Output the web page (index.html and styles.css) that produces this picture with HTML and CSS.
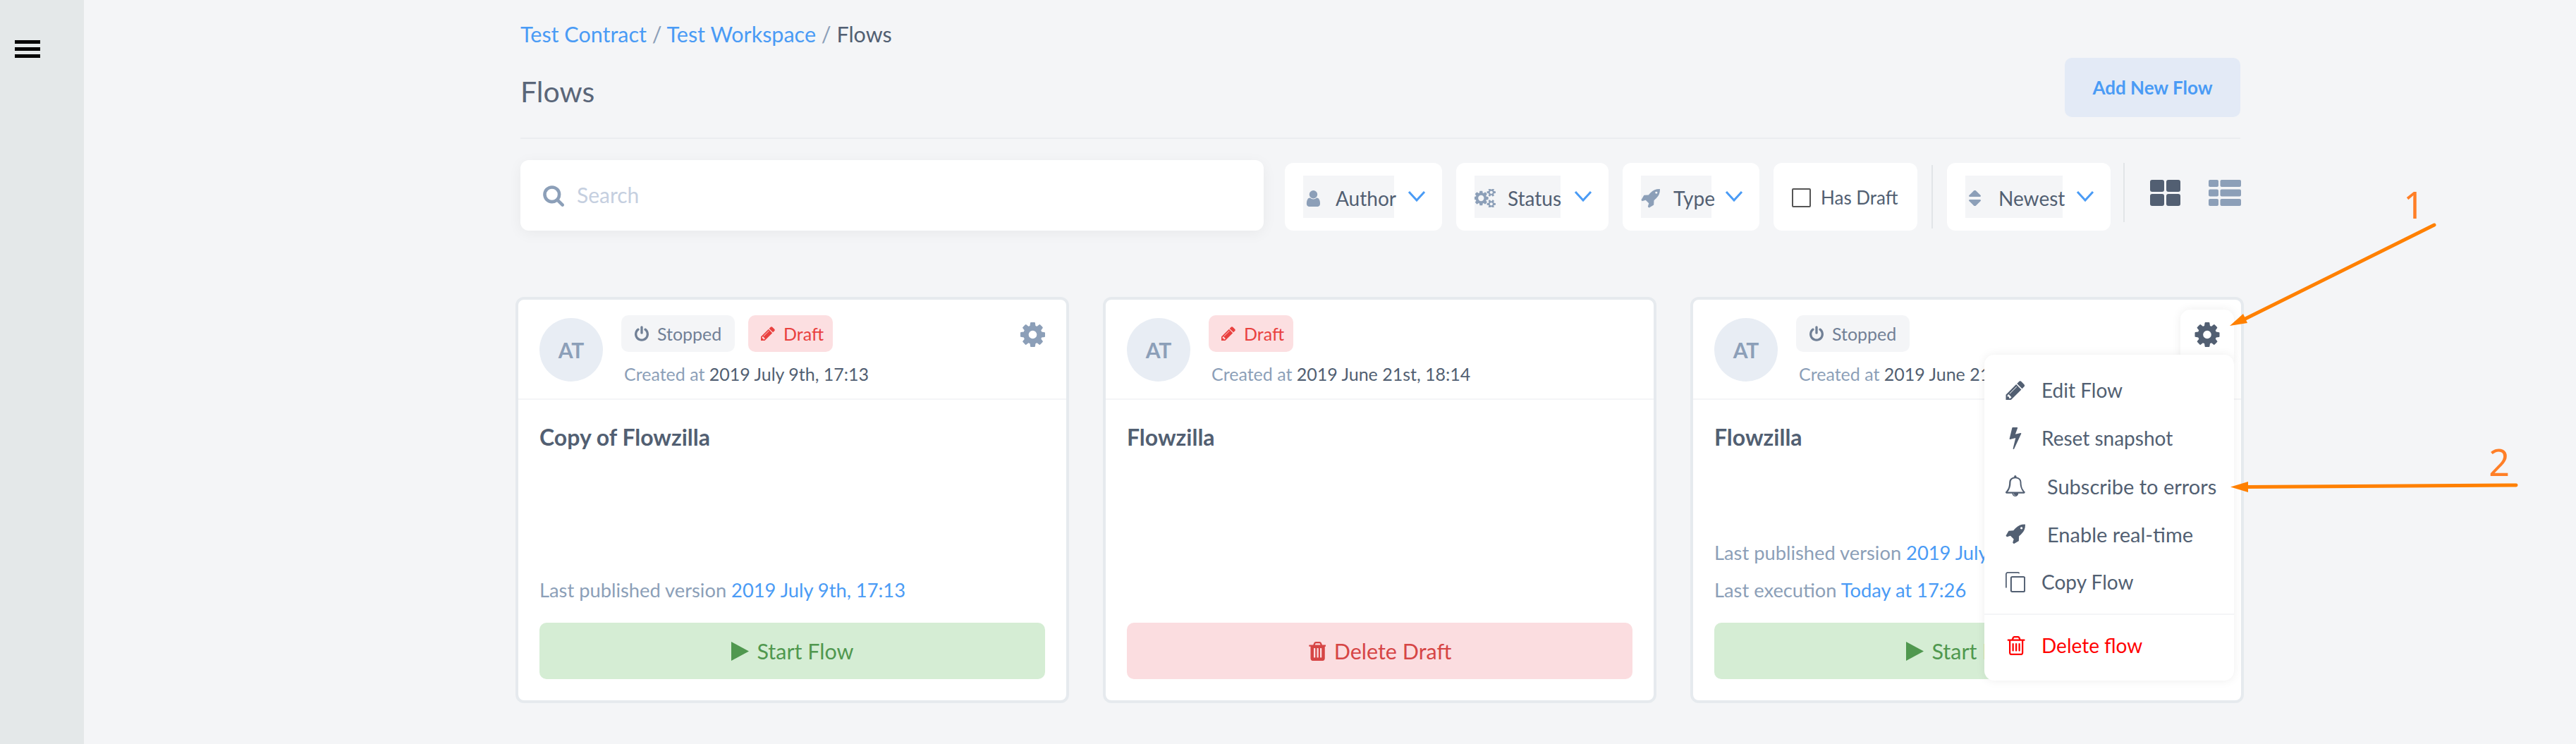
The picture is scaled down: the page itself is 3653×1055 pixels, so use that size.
FILE: index.html
```html
<!DOCTYPE html>
<html lang="en">
<head>
  <meta charset="UTF-8" />
  <meta name="viewport" content="width=device-width, initial-scale=1" />
  <title>Flows</title>
  <link rel="stylesheet" href="styles.css">
</head>
<body>
  <svg class="sprite" xmlns="http://www.w3.org/2000/svg">
    <symbol id="i-search" viewBox="0 64 1728 1728"><path d="M1216 832q0-185-131.5-316.5t-316.5-131.5-316.5 131.5-131.5 316.5 131.5 316.5 316.5 131.5 316.5-131.5 131.5-316.5zm512 832q0 52-38 90t-90 38q-54 0-90-38l-343-342q-179 124-399 124-143 0-273.5-55.5t-225-150-150-225-55.5-273.5 55.5-273.5 150-225 225-150 273.5-55.5 273.5 55.5 225 150 150 225 55.5 273.5q0 220-124 399l343 343q37 37 37 90z"/></symbol>
    <symbol id="i-user" viewBox="128 128 1408 1536"><path d="M1536 1399q0 109-62.5 187t-150.5 78h-854q-88 0-150.5-78t-62.5-187q0-85 8.5-160.5t31.5-152 58.5-131 94-89 134.5-34.5q131 128 313 128t313-128q76 0 134.5 34.5t94 89 58.5 131 31.5 152 8.5 160.5zm-256-887q0 159-112.5 271.5t-271.5 112.5-271.5-112.5-112.5-271.5 112.5-271.5 271.5-112.5 271.5 112.5 112.5 271.5z"/></symbol>
    <symbol id="i-cogs" viewBox="0 128 1920 1536"><path d="M832 896q0-106-75-181t-181-75-181 75-75 181 75 181 181 75 181-75 75-181zm768 512q0-52-38-90t-90-38-90 38-38 90q0 53 37.5 90.5t90.5 37.5 90.5-37.5 37.5-90.5zm0-1024q0-52-38-90t-90-38-90 38-38 90q0 53 37.5 90.5t90.5 37.5 90.5-37.5 37.5-90.5zm-384 421v185q0 10-7 19.5t-16 10.5l-155 24q-11 35-32 76 34 48 90 115 7 11 7 20 0 12-7 19-23 30-82.5 89.5t-78.5 59.5q-11 0-21-7l-115-90q-37 19-77 31-11 108-23 155-7 24-30 24h-186q-11 0-20-7.5t-10-17.5l-23-153q-34-10-75-31l-118 89q-7 7-20 7-11 0-21-8-144-133-144-160 0-9 7-19 10-14 41-53t47-61q-23-44-35-82l-152-24q-10-1-17-9.5t-7-19.5v-185q0-10 7-19.5t16-10.5l155-24q11-35 32-76-34-48-90-115-7-11-7-20 0-12 7-20 22-30 82-89t79-59q11 0 21 7l115 90q34-18 77-32 11-108 23-154 7-24 30-24h186q11 0 20 7.5t10 17.5l23 153q34 10 75 31l118-89q8-7 20-7 11 0 21 8 144 133 144 160 0 8-7 19-12 16-42 54t-45 60q23 48 34 82l152 23q10 2 17 10.5t7 19.5zm640 533v140q0 16-149 31-12 27-30 52 51 113 51 138 0 4-4 7-122 71-124 71-8 0-46-47t-52-68q-20 2-30 2t-30-2q-14 21-52 68t-46 47q-2 0-124-71-4-3-4-7 0-25 51-138-18-25-30-52-149-15-149-31v-140q0-16 149-31 13-29 30-52-51-113-51-138 0-4 4-7 4-2 35-20t59-34 30-16q8 0 46 46.5t52 67.5q20-2 30-2t30 2q51-71 92-112l6-2q4 0 124 70 4 3 4 7 0 25-51 138 17 23 30 52 149 15 149 31zm0-1024v140q0 16-149 31-12 27-30 52 51 113 51 138 0 4-4 7-122 71-124 71-8 0-46-47t-52-68q-20 2-30 2t-30-2q-14 21-52 68t-46 47q-2 0-124-71-4-3-4-7 0-25 51-138-18-25-30-52-149-15-149-31v-140q0-16 149-31 13-29 30-52-51-113-51-138 0-4 4-7 4-2 35-20t59-34 30-16q8 0 46 46.5t52 67.5q20-2 30-2t30 2q51-71 92-112l6-2q4 0 124 70 4 3 4 7 0 25-51 138 17 23 30 52 149 15 149 31z"/></symbol>
    <symbol id="i-rocket" viewBox="64 128 1664 1664"><path d="M1504 448q0-40-28-68t-68-28-68 28-28 68 28 68 68 28 68-28 28-68zm224-288q0 249-75.5 430.5t-253.5 360.5q-81 80-195 176l-20 379q-2 16-16 26l-384 224q-7 4-16 4-12 0-23-9l-64-64q-13-14-8-32l85-276-281-281-276 85q-3 1-9 1-14 0-23-9l-64-64q-17-19-5-39l224-384q10-14 26-16l379-20q96-114 176-195 188-187 358-258t431-71q14 0 24 9.5t10 22.5z"/></symbol>
    <symbol id="i-sort" viewBox="320 256 1088 1280"><path d="M1408 1088q0 26-19 45l-448 448q-19 19-45 19t-45-19l-448-448q-19-19-19-45t19-45 45-19h896q26 0 45 19t19 45zm0-384q0 26-19 45t-45 19h-896q-26 0-45-19t-19-45 19-45l448-448q19-19 45-19t45 19l448 448q19 19 19 45z"/></symbol>
    <symbol id="i-power" viewBox="128 0 1536 1664"><path d="M1664 896q0 156-61 298t-164 245-245 164-298 61-298-61-245-164-164-245-61-298q0-182 80.5-343t226.5-270q43-32 95.5-25t83.5 50q32 42 24.5 94.5t-49.5 84.5q-98 74-151.5 181t-53.5 228q0 104 40.5 198.5t109.5 163.5 163.5 109.5 198.5 40.5 198.5-40.5 163.5-109.5 109.5-163.5 40.5-198.5q0-121-53.5-228t-151.5-181q-42-32-49.5-84.5t24.5-94.5q31-43 84-50t95 25q146 109 226.5 270t80.5 343zm-640-768v640q0 52-38 90t-90 38-90-38-38-90v-640q0-52 38-90t90-38 90 38 38 90z"/></symbol>
    <symbol id="i-pencil" viewBox="128 128 1536 1536"><path d="M491 1536l91-91-235-235-91 91v107h128v128h107zm523-928q0-22-22-22-10 0-17 7l-542 542q-7 7-7 17 0 22 22 22 10 0 17-7l542-542q7-7 7-17zm-54-192l416 416-832 832h-416v-416zm683 96q0 53-37 90l-166 166-416-416 166-165q36-38 90-38 53 0 91 38l235 234q37 39 37 91z"/></symbol>
    <symbol id="i-gear" viewBox="128 128 1536 1536"><path d="M1152 896q0-106-75-181t-181-75-181 75-75 181 75 181 181 75 181-75 75-181zm512-109v222q0 12-8 23t-20 13l-185 28q-19 54-39 91 35 50 107 138 10 12 10 25t-9 23q-27 37-99 108t-94 71q-12 0-26-9l-138-108q-44 23-91 38-16 136-29 186-7 28-36 28h-222q-14 0-24.5-8.5t-11.5-21.5l-28-184q-49-16-90-37l-141 107q-10 9-25 9-14 0-25-11-126-114-165-168-7-10-7-23 0-12 8-23 15-21 51-66.5t54-70.5q-27-50-41-99l-183-27q-13-2-21-12.5t-8-23.5v-222q0-12 8-23t19-13l186-28q14-46 39-92-40-57-107-138-10-12-10-24 0-10 9-23 26-36 98.5-107.5t94.5-71.5q13 0 26 10l138 107q44-23 91-38 16-136 29-186 7-28 36-28h222q14 0 24.5 8.5t11.5 21.5l28 184q49 16 90 37l142-107q9-9 24-9 13 0 25 10 129 119 165 170 7 8 7 22 0 12-8 23-15 21-51 66.5t-54 70.5q26 50 41 98l183 28q13 2 21 12.5t8 23.5z"/></symbol>
    <symbol id="i-bolt" viewBox="448 128 896 1664"><path d="M1333 566q18 20 7 44l-540 1157q-13 25-42 25-4 0-14-2-17-5-25.5-19t-4.5-30l197-808-406 101q-4 1-12 1-18 0-31-11-18-15-13-39l201-825q4-14 16-23t28-9h328q19 0 32 12.5t13 29.5q0 8-5 18l-171 463 396-98q8-2 12-2 19 0 34 15z"/></symbol>
    <symbol id="i-bell" viewBox="64 0 1664 1792"><path d="M912 1696q0-16-16-16-59 0-101.5-42.5t-42.5-101.5q0-16-16-16t-16 16q0 73 51.5 124.5t124.5 51.5q16 0 16-16zm-666-288h1300q-266-300-266-832 0-51-24-105t-69-103-121.5-80.5-169.5-31.5-169.5 31.5-121.5 80.5-69 103-24 105q0 532-266 832zm1472 0q0 52-38 90t-90 38h-448q0 106-75 181t-181 75-181-75-75-181h-448q-52 0-90-38t-38-90q50-42 91-88t85-119.5 74.5-158.5 50-206 19.5-260q0-152 117-282.5t307-158.5q-8-19-8-39 0-40 28-68t68-28 68 28 28 68q0 20-8 39 190 28 307 158.5t117 282.5q0 139 19.5 260t50 206 74.5 158.5 85 119.5 91 88z"/></symbol>
    <symbol id="i-trash-o" viewBox="128 128 1408 1536"><path d="M704 736v576q0 14-9 23t-23 9h-64q-14 0-23-9t-9-23v-576q0-14 9-23t23-9h64q14 0 23 9t9 23zm256 0v576q0 14-9 23t-23 9h-64q-14 0-23-9t-9-23v-576q0-14 9-23t23-9h64q14 0 23 9t9 23zm256 0v576q0 14-9 23t-23 9h-64q-14 0-23-9t-9-23v-576q0-14 9-23t23-9h64q14 0 23 9t9 23zm128 724v-948h-896v948q0 22 7 40.5t14.5 27 10.5 8.5h832q3 0 10.5-8.5t14.5-27 7-40.5zm-672-1076h448l-48-117q-7-9-17-11h-317q-10 2-17 11zm928 32v64q0 14-9 23t-23 9h-96v948q0 83-47 143.5t-113 60.5h-832q-66 0-113-58.5t-47-141.5v-952h-96q-14 0-23-9t-9-23v-64q0-14 9-23t23-9h309l70-167q15-37 54-63t79-26h320q40 0 79 26t54 63l70 167h309q14 0 23 9t9 23z"/></symbol>
    <symbol id="i-trash" viewBox="128 128 1408 1536"><path d="M704 1376v-704q0-14-9-23t-23-9h-64q-14 0-23 9t-9 23v704q0 14 9 23t23 9h64q14 0 23-9t9-23zm256 0v-704q0-14-9-23t-23-9h-64q-14 0-23 9t-9 23v704q0 14 9 23t23 9h64q14 0 23-9t9-23zm256 0v-704q0-14-9-23t-23-9h-64q-14 0-23 9t-9 23v704q0 14 9 23t23 9h64q14 0 23-9t9-23zm-544-992h448l-48-117q-7-9-17-11h-317q-10 2-17 11zm928 32v64q0 14-9 23t-23 9h-96v948q0 83-47 143.5t-113 60.5h-832q-66 0-113-58.5t-47-141.5v-952h-96q-14 0-23-9t-9-23v-64q0-14 9-23t23-9h309l70-167q15-37 54-63t79-26h320q40 0 79 26t54 63l70 167h309q14 0 23 9t9 23z"/></symbol>
    <symbol id="i-chevron" viewBox="0 0 26 16"><path d="M2 2l11 12L24 2" fill="none" stroke="currentColor" stroke-width="3"/></symbol>
    <symbol id="i-play" viewBox="0 0 25 27"><path d="M0 0l25 13.500L0 27z"/></symbol>
    <symbol id="i-copy" viewBox="0 0 32 33"><path d="M22 2.500a1.500 1.500 0 0 0-1.500-1.500H3.500A2.500 2.500 0 0 0 1 3.500v22" fill="none" stroke="currentColor" stroke-width="2"/><rect x="9" y="8" width="22" height="24" rx="2" fill="none" stroke="currentColor" stroke-width="2.400"/></symbol>
    <symbol id="i-grid" viewBox="0 0 43 37"><rect width="20" height="17" rx="3"/><rect x="23" width="20" height="17" rx="3"/><rect y="20" width="20" height="17" rx="3"/><rect x="23" y="20" width="20" height="17" rx="3"/></symbol>
    <symbol id="i-list" viewBox="0 0 46 37"><rect width="14" height="10" rx="2"/><rect x="16.500" width="29.500" height="10" rx="2"/><rect y="13.500" width="14" height="10" rx="2"/><rect x="16.500" y="13.500" width="29.500" height="10" rx="2"/><rect y="27" width="14" height="10" rx="2"/><rect x="16.500" y="27" width="29.500" height="10" rx="2"/></symbol>
  </svg>

  <aside class="sidebar">
    <button class="hamburger" type="button" aria-label="Menu"><span></span><span></span><span></span></button>
  </aside>

  <main class="main">
    <div class="content">
      <nav class="breadcrumb">
        <a href="#">Test Contract</a> <span class="sep">/</span> <a href="#">Test Workspace</a> <span class="sep">/</span> <span class="current">Flows</span>
      </nav>

      <header class="page-header">
        <h1>Flows</h1>
        <button class="add-btn" type="button">Add New Flow</button>
      </header>

      <div class="toolbar">
        <label class="search">
          <svg class="icon search-icon"><use href="#i-search"/></svg>
          <input type="text" placeholder="Search" />
        </label>

        <div class="filter">
          <div class="filter-box box-author"><svg class="icon fi-user"><use href="#i-user"/></svg><span>Author</span></div>
          <svg class="chevron"><use href="#i-chevron"/></svg>
        </div>
        <div class="filter">
          <div class="filter-box box-status"><svg class="icon fi-cogs"><use href="#i-cogs"/></svg><span>Status</span></div>
          <svg class="chevron"><use href="#i-chevron"/></svg>
        </div>
        <div class="filter">
          <div class="filter-box box-type"><svg class="icon fi-rocket"><use href="#i-rocket"/></svg><span>Type</span></div>
          <svg class="chevron"><use href="#i-chevron"/></svg>
        </div>
        <label class="filter has-draft"><input type="checkbox" /><span>Has Draft</span></label>
        <div class="vline vline-a"></div>
        <div class="filter">
          <div class="filter-box box-sort"><svg class="icon fi-sort"><use href="#i-sort"/></svg><span>Newest</span></div>
          <svg class="chevron"><use href="#i-chevron"/></svg>
        </div>
        <div class="vline vline-b"></div>
        <div class="view-switch">
          <svg class="view-grid"><use href="#i-grid"/></svg>
          <svg class="view-list"><use href="#i-list"/></svg>
        </div>
      </div>

      <section class="cards">
        <article class="card">
          <div class="card-head">
            <div class="avatar">AT</div>
            <div class="card-meta">
              <div class="badges">
                <span class="badge badge-stopped"><svg class="icon"><use href="#i-power"/></svg>Stopped</span>
                <span class="badge badge-draft"><svg class="icon"><use href="#i-pencil"/></svg>Draft</span>
              </div>
              <div class="created">Created at <span>2019 July 9th, 17:13</span></div>
            </div>
            <svg class="icon card-gear"><use href="#i-gear"/></svg>
          </div>
          <div class="card-body">
            <h3>Copy of Flowzilla</h3>
            <div class="card-foot">
              <p class="info">Last published version <a href="#">2019 July 9th, 17:13</a></p>
              <button class="action action-start" type="button"><svg class="icon"><use href="#i-play"/></svg>Start Flow</button>
            </div>
          </div>
        </article>

        <article class="card">
          <div class="card-head">
            <div class="avatar">AT</div>
            <div class="card-meta">
              <div class="badges">
                <span class="badge badge-draft"><svg class="icon"><use href="#i-pencil"/></svg>Draft</span>
              </div>
              <div class="created">Created at <span>2019 June 21st, 18:14</span></div>
            </div>
          </div>
          <div class="card-body">
            <h3>Flowzilla</h3>
            <div class="card-foot">
              <button class="action action-delete" type="button"><svg class="icon"><use href="#i-trash"/></svg>Delete Draft</button>
            </div>
          </div>
        </article>

        <article class="card">
          <div class="card-head">
            <div class="avatar">AT</div>
            <div class="card-meta">
              <div class="badges">
                <span class="badge badge-stopped"><svg class="icon"><use href="#i-power"/></svg>Stopped</span>
              </div>
              <div class="created">Created at <span>2019 June 21st, 18:14</span></div>
            </div>
          </div>
          <div class="card-body">
            <h3>Flowzilla</h3>
            <div class="card-foot">
              <p class="info info-spaced">Last published version <a href="#">2019 July 9th, 17:13</a></p>
              <p class="info">Last execution <a href="#">Today at 17:26</a></p>
              <button class="action action-start" type="button"><svg class="icon"><use href="#i-play"/></svg>Start Flow</button>
            </div>
          </div>

          <!-- open settings menu -->
          <div class="gear-tab"><svg class="icon"><use href="#i-gear"/></svg></div>
          <ul class="menu">
            <li><svg class="icon m-pencil"><use href="#i-pencil"/></svg>Edit Flow</li>
            <li><svg class="icon m-bolt"><use href="#i-bolt"/></svg>Reset snapshot</li>
            <li class="wide"><svg class="icon m-bell"><use href="#i-bell"/></svg>Subscribe to errors</li>
            <li class="wide"><svg class="icon m-rocket"><use href="#i-rocket"/></svg>Enable real-time</li>
            <li><svg class="icon m-copy"><use href="#i-copy"/></svg>Copy Flow</li>
            <li class="menu-delete"><svg class="icon m-trash"><use href="#i-trash-o"/></svg>Delete flow</li>
          </ul>
        </article>
      </section>
    </div>
  </main>

  <!-- hand drawn notes on top of the screenshot -->
  <svg class="notes" width="3653" height="1055" viewBox="0 0 3653 1055" xmlns="http://www.w3.org/2000/svg">
    <text x="3423" y="310" text-anchor="middle" class="note-num">1</text>
    <text x="3544" y="675" text-anchor="middle" class="note-num">2</text>
    <path d="M3452 319L3178 455" class="note-line"/>
    <path d="M3162 462L3181 445L3187 458z" class="note-head"/>
    <path d="M3568 688L3185 690.500" class="note-line"/>
    <path d="M3163 690.500L3188 683L3188 698z" class="note-head"/>
  </svg>
</body>
</html>
```

FILE: styles.css
```css
* {
  margin: 0;
  padding: 0;
  box-sizing: border-box;
}

html, body {
  height: 100%;
}

body {
  font-family: 'Lato', 'Noto Sans', sans-serif;
  background-color: #f4f5f7;
  color: #525f72;
  display: flex;
  overflow: hidden;
  position: relative;
}

.sprite {
  display: none;
}

.icon {
  fill: currentColor;
  flex-shrink: 0;
}

a {
  color: #4a9bf5;
  text-decoration: none;
}

/* sidebar */
.sidebar {
  width: 119px;
  flex-shrink: 0;
  background-color: #e4e8e9;
  padding: 57px 0 0 21px;
}

.hamburger {
  display: flex;
  flex-direction: column;
  gap: 5px;
  width: 36px;
  border: none;
  background: none;
}

.hamburger span {
  display: block;
  height: 5px;
  background-color: #000;
}

/* main column */
.main {
  flex: 1;
  padding: 28px 0 0 619px;
}

.content {
  width: 2439px;
}

.breadcrumb {
  font-size: 30.500px;
  line-height: 40px;
  color: #8c9fb8;
}

.breadcrumb .current {
  color: #525f72;
}

.page-header {
  display: flex;
  justify-content: space-between;
  align-items: flex-start;
  margin-top: 14px;
  height: 115px;
  border-bottom: 2px solid #ebedf0;
}

.page-header h1 {
  font-size: 41px;
  font-weight: 400;
  line-height: 56px;
  margin-top: 20px;
  color: #5a6679;
}

.add-btn {
  width: 249px;
  height: 84px;
  border: none;
  border-radius: 10px;
  background-color: #e3eaf6;
  color: #4a9bf5;
  font-family: inherit;
  font-size: 26px;
  font-weight: 700;
}

/* toolbar */
.toolbar {
  display: flex;
  align-items: flex-start;
  gap: 20px;
  margin-top: 30px;
}

.toolbar > * {
  flex-shrink: 0;
}

.search {
  width: 1054px;
  height: 100px;
  margin-right: 10px;
  display: flex;
  align-items: center;
  padding-left: 31px;
  gap: 18px;
  background-color: #fff;
  border-radius: 12px;
  box-shadow: 0 4px 20px rgba(0, 0, 0, 0.05);
}

.search-icon {
  width: 31px;
  height: 31px;
  color: #8c9fb8;
}

.search input {
  flex: 1;
  border: none;
  outline: none;
  font-family: inherit;
  font-size: 30px;
  color: #525f72;
  padding-bottom: 2px;
}

.search input::placeholder {
  color: #c5cfdf;
}

.filter {
  height: 96px;
  margin-top: 4px;
  display: flex;
  align-items: center;
  padding: 0 23px 0 26px;
  background-color: #fff;
  border-radius: 12px;
  font-size: 28px;
}

.filter-box {
  height: 60px;
  display: flex;
  align-items: center;
  background-color: #f4f5f7;
  white-space: nowrap;
  margin-right: 19px;
  padding-top: 4px;
}

.filter-box .icon {
  color: #8c9fb8;
}

.box-author { width: 129px; }
.box-status { width: 122px; }
.box-type { width: 100px; }
.box-sort { width: 138px; }

.fi-user { width: 21px; height: 25px; margin: 0 22px 0 3px; }
.fi-cogs { width: 31px; height: 26px; margin-right: 16px; }
.fi-rocket { width: 27px; height: 27px; margin-right: 19px; }
.fi-sort { width: 18px; height: 22px; margin: 0 25px 0 4px; }

.chevron {
  width: 26px;
  height: 16px;
  color: #4a9bf5;
  flex-shrink: 0;
  margin-top: -2px;
}

.has-draft {
  width: 204px;
  gap: 14px;
  font-size: 26px;
  padding-top: 2px;
}

.has-draft input {
  appearance: none;
  width: 27px;
  height: 27px;
  border: 2px solid #555;
  border-radius: 2px;
  background-color: #fff;
}

.vline {
  width: 2px;
  background-color: #e2e5e8;
}

.vline-a {
  height: 90px;
  margin-top: 7px;
}

.vline-b {
  height: 84px;
  margin-top: 4px;
  margin-left: -2px;
}

.view-switch {
  display: flex;
  gap: 40px;
  margin: 28px 0 0 16px;
}

.view-grid {
  width: 43px;
  height: 37px;
  fill: #525f72;
}

.view-list {
  width: 46px;
  height: 37px;
  fill: #8c9fb8;
}

/* cards */
.cards {
  display: flex;
  gap: 48px;
  margin: 94px 0 0 -7px;
}

.card {
  position: relative;
  flex: 0 0 785px;
  height: 576px;
  display: flex;
  flex-direction: column;
  background-color: #fff;
  border: 4px solid #e6eaee;
  border-radius: 12px;
}

.card-head {
  position: relative;
  height: 142px;
  flex-shrink: 0;
  display: flex;
  align-items: flex-start;
  gap: 26px;
  padding: 22px 30px 0;
  border-bottom: 2px solid #f4f5f7;
}

.avatar {
  width: 90px;
  height: 90px;
  margin-top: 4px;
  flex-shrink: 0;
  display: flex;
  align-items: center;
  justify-content: center;
  border-radius: 50%;
  background-color: #e8edf4;
  color: #8c9fb8;
  font-size: 30px;
  font-weight: 700;
}

.badges {
  display: flex;
  gap: 19px;
}

.badge {
  height: 52px;
  display: flex;
  align-items: center;
  border-radius: 10px;
  font-size: 25px;
}

.badge .icon {
  width: 20px;
  height: 22px;
}

.badge-stopped {
  width: 161px;
  padding-left: 19px;
  gap: 12px;
  background-color: #f4f5f7;
  color: #718096;
}

.badge-draft {
  width: 120px;
  padding-left: 18px;
  gap: 12px;
  background-color: #fcdfe1;
  color: #e9413f;
}

.created {
  margin: 13px 0 0 4px;
  font-size: 25px;
  line-height: 36px;
  color: #8c9fb8;
  white-space: nowrap;
}

.created span {
  color: #525f72;
}

.card-gear {
  position: absolute;
  top: 32px;
  right: 30px;
  width: 35px;
  height: 35px;
  color: #8c9fb8;
}

.card-body {
  flex: 1;
  display: flex;
  flex-direction: column;
  padding: 33px 30px 30px;
}

.card-body h3 {
  font-size: 32px;
  line-height: 40px;
  font-weight: 700;
  color: #525f72;
}

.card-foot {
  margin-top: auto;
}

.info {
  font-size: 27.300px;
  line-height: 36px;
  margin-bottom: 28px;
  color: #8c9fb8;
}

.info-spaced {
  margin-bottom: 17px;
}

.action {
  width: 100%;
  height: 80px;
  display: flex;
  align-items: center;
  justify-content: center;
  gap: 12px;
  border: none;
  border-radius: 10px;
  font-family: inherit;
  font-size: 30.500px;
}

.action-start {
  background-color: #d5edd4;
  color: #50984f;
}

.action-start .icon {
  width: 25px;
  height: 27px;
}

.action-delete {
  background-color: #fbdde0;
  color: #d64545;
}

.action-delete .icon {
  width: 25px;
  height: 27px;
}

/* settings dropdown */
.gear-tab {
  position: absolute;
  top: 14px;
  right: 10px;
  width: 76px;
  height: 72px;
  display: flex;
  justify-content: center;
  padding-top: 18px;
  background-color: #fff;
  border-radius: 14px 14px 0 0;
  box-shadow: 0 0 14px rgba(0, 0, 0, 0.07);
  z-index: 1;
}

.gear-tab .icon {
  width: 36px;
  height: 35px;
}

.menu {
  position: absolute;
  top: 78px;
  right: 10px;
  width: 354px;
  height: 462px;
  list-style: none;
  padding-top: 16px;
  background-color: #fff;
  border-radius: 14px;
  box-shadow: 0 0 14px rgba(0, 0, 0, 0.07);
  z-index: 2;
}

.menu li {
  height: 68px;
  display: flex;
  align-items: center;
  font-size: 28px;
  padding-left: 30px;
}

.menu li .icon {
  margin-right: 23px;
}

.menu li.wide {
  font-size: 29px;
}

.menu li.wide .icon {
  margin-right: 31px;
}

.m-pencil { width: 28px; height: 27px; }
.m-bolt { width: 28px; height: 31px; }
.m-bell { width: 28px; height: 32px; }
.m-rocket { width: 28px; height: 29px; }
.m-copy { width: 28px; height: 33px; }
.m-trash { width: 28px; height: 27px; }

.menu .menu-delete {
  margin-top: 11px;
  height: 88px;
  border-top: 2px solid #f4f5f7;
  color: #ff0000;
}

/* notes */
.notes {
  position: absolute;
  top: 0;
  left: 0;
  z-index: 5;
}

.note-num {
  font-family: 'Noto Sans', sans-serif;
  font-size: 52px;
  fill: #ff7f27;
}

.note-line {
  fill: none;
  stroke: #ff8000;
  stroke-width: 5;
  stroke-linecap: round;
}

.note-head {
  fill: #ff8000;
}
```
